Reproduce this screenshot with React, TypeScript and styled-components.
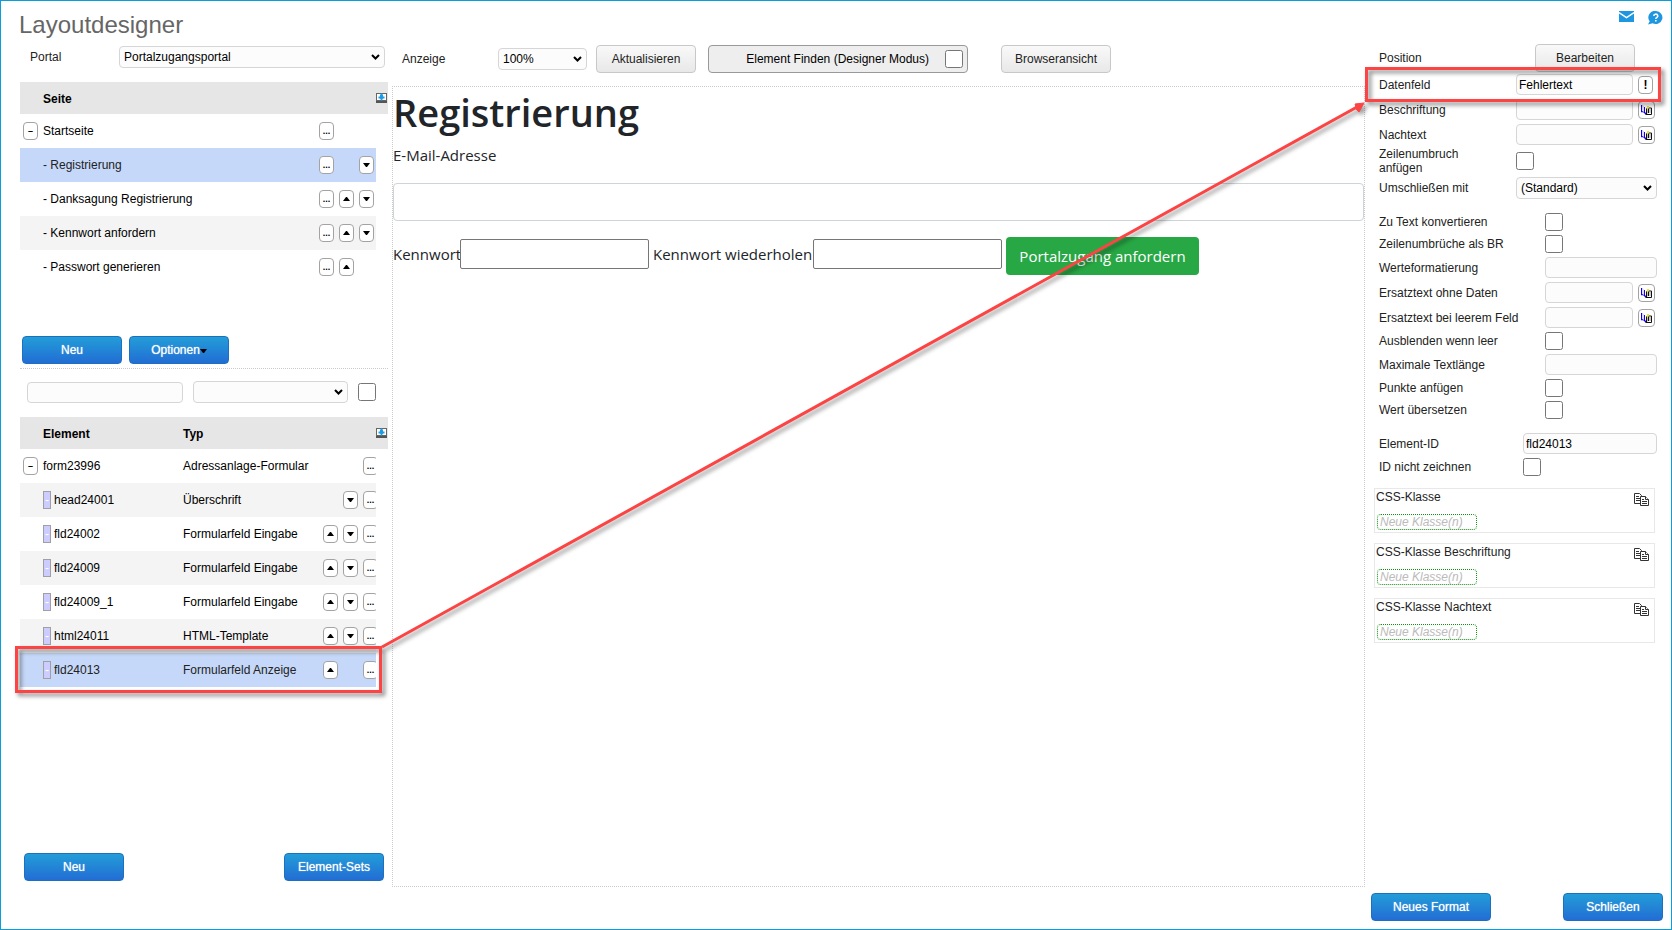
import React from "react";
import styled, { createGlobalStyle, css } from "styled-components";

const GlobalStyle = createGlobalStyle`
  *, *::before, *::after { box-sizing: border-box; }
  body {
    margin: 0;
    background: #fff;
    color: #222;
    font: 12px/14px "Liberation Sans", Arial, sans-serif;
  }
  button, input, select { font: inherit; color: #000; margin: 0; }
  button { padding: 0; cursor: pointer; }
`;

const accent = "#0a9fdb";
const marker = "#fb4443";

const Page = styled.div`
  position: relative;
  display: flex;
  flex-direction: column;
  min-height: 100vh;
  border: 1px solid ${accent};
`;

const Header = styled.header`
  display: flex;
  justify-content: space-between;
  align-items: flex-start;
  padding: 10px 8px 2px 18px;
`;

const Title = styled.h1`
  margin: 0;
  font-size: 24px;
  line-height: 28px;
  font-weight: 400;
  color: #666;
`;

const HeaderLinks = styled.nav`
  display: flex;
  gap: 14px;
  a { display: block; height: 14px; }
  svg { display: block; }
`;

const Columns = styled.main`
  flex: 1;
  display: flex;
  padding-left: 19px;
`;

/* Shared controls */

const control = css`
  border: 1px solid #d6d6d6;
  border-radius: 4px;
  background: #fcfcfc;
  min-width: 0;
`;

const TextInput = styled.input<{ $width?: number }>`
  ${control}
  ${(p) => (p.$width ? `width: ${p.$width}px;` : "flex: 1; width: 0;")}
  height: 21px;
  padding: 0 2px;
`;

const SelectBox = styled.div<{ $width?: number }>`
  position: relative;
  ${(p) => (p.$width ? `width: ${p.$width}px;` : "flex: 1;")}
  select {
    ${control}
    display: block;
    appearance: none;
    width: 100%;
    height: 22px;
    padding: 0 18px 0 4px;
  }
  svg {
    position: absolute;
    right: 5px;
    top: 8px;
    pointer-events: none;
  }
`;

const Checkbox = styled.input.attrs({ type: "checkbox" })`
  flex: none;
  width: 18px;
  height: 18px;
`;

const PrimaryButton = styled.button<{ $wide?: boolean }>`
  width: ${(p) => (p.$wide ? 120 : 100)}px;
  height: 28px;
  border: 1px solid #1c70bf;
  border-radius: 4px;
  background: linear-gradient(#239dd8, #226dd4);
  color: #fff;
  text-shadow: 0 0 1px rgba(255, 255, 255, 0.8);
  svg { vertical-align: middle; }
`;

const SecondaryButton = styled.button<{ $wide?: boolean }>`
  width: ${(p) => (p.$wide ? 110 : 100)}px;
  height: 28px;
  border: 1px solid #c8c8c8;
  border-radius: 4px;
  background: linear-gradient(#f9f9f9, #e8e8e8);
  color: #222;
`;

const MiniButton = styled.button<{ $wide?: boolean }>`
  flex: none;
  display: flex;
  align-items: center;
  justify-content: center;
  width: ${(p) => (p.$wide ? 17 : 15)}px;
  height: 18px;
  border: 1px solid #a3a3a3;
  border-radius: 4px;
  background: #fff;
`;

const Dots = styled.span`
  font-size: 9px;
  line-height: 12px;
  font-weight: 700;
`;

const Minus = styled.span`
  font-size: 9px;
  line-height: 12px;
  font-weight: 700;
`;

/* Left column */

const Sidebar = styled.aside`
  flex: none;
  display: flex;
  flex-direction: column;
  width: 368px;
  padding-bottom: 48px;
`;

const PortalRow = styled.div`
  display: flex;
  justify-content: space-between;
  align-items: center;
  padding: 5px 3px 14px 10px;
`;

const PagesPane = styled.section`
  height: 254px;
`;

const ElementsPane = styled.section`
  flex: 1;
`;

const Tree = styled.table`
  width: 100%;
  table-layout: fixed;
  border-collapse: collapse;
  color: #000;
  th, td { padding: 0; text-align: left; }
  th { padding-top: 2px; }
`;

const HeadRow = styled.tr`
  height: 32px;
  background: #e6e6e6;
  svg { display: block; }
`;

const BodyRow = styled.tr<{ $tone?: "selected" | "striped" }>`
  height: 34px;
  color: ${(p) => (p.$tone === "selected" ? "#222" : "#000")};
  td:not(:last-child) {
    background: ${(p) =>
      p.$tone === "selected" ? "#c6d8f9" : p.$tone === "striped" ? "#f4f4f4" : "#fff"};
  }
`;

const Toggle = styled.div`
  padding-left: 3px;
`;

const ElementName = styled.div`
  display: flex;
  align-items: center;
  gap: 3px;
`;

const Handle = styled.span`
  width: 8px;
  height: 18px;
  border: 1px solid #a0a0a0;
  background: #ccccff;
  color: #fff;
  line-height: 16px;
  text-align: center;
`;

const Actions = styled.div`
  display: grid;
  grid-template-columns: repeat(3, 15px);
  gap: 5px;
  overflow: hidden;
`;

const ButtonBar = styled.div`
  display: flex;
  gap: 7px;
  padding: 0 2px 4px;
  border-bottom: 1px dotted #ccc;
`;

const FilterBar = styled.div`
  display: flex;
  align-items: center;
  gap: 10px;
  padding: 12px 12px 14px 7px;
`;

const SidebarFooter = styled.footer`
  display: flex;
  justify-content: space-between;
  padding: 0 4px;
`;

/* Centre column */

const Workspace = styled.section`
  flex: 1;
  min-width: 0;
  display: flex;
  flex-direction: column;
  margin-left: 4px;
  padding-bottom: 42px;
`;

const Toolbar = styled.div`
  display: flex;
  align-items: center;
  padding: 4px 0 13px 10px;
`;

const ToolbarLabel = styled.label`
  width: 96px;
`;

const ToolbarGroup = styled.div`
  display: flex;
  align-items: center;
  gap: 12px;
  margin: 0 33px 0 9px;
`;

const FinderToggle = styled.label`
  display: flex;
  align-items: center;
  justify-content: flex-end;
  gap: 16px;
  width: 260px;
  height: 28px;
  padding-right: 4px;
  border: 1px solid #999;
  border-radius: 4px;
  background: #eee;
  color: #000;
`;

const Preview = styled.div`
  flex: 1;
  border: 1px dotted #ccc;
  color: #212529;
  font: 15px/24px "Open Sans", "Noto Sans", sans-serif;
`;

const PreviewHeading = styled.h2`
  margin: 0;
  padding: 1px 0 7px;
  font-size: 38px;
  line-height: 48px;
  font-weight: 600;
`;

const EmailField = styled.label`
  display: flex;
  flex-direction: column;
  gap: 16px;
  margin-bottom: 16px;
`;

const EmailInput = styled.input`
  width: 100%;
  height: 38px;
  border: 1px solid #ced4da;
  border-radius: 4px;
  background: #fff;
`;

const PasswordRow = styled.div`
  display: flex;
  align-items: flex-start;
`;

const PasswordField = styled.label<{ $labelWidth: number }>`
  display: flex;
  align-items: center;
  margin-right: 4px;
  padding-top: 2px;
  white-space: nowrap;
  span { width: ${(p) => p.$labelWidth}px; }
`;

const PasswordInput = styled.input`
  width: 189px;
  height: 30px;
  border: 1px solid #767676;
  border-radius: 2px;
  background: #fff;
`;

const SubmitButton = styled.button`
  width: 193px;
  height: 38px;
  border: 0;
  border-radius: 4px;
  background: #28a745;
  color: #fff;
  white-space: nowrap;
`;

/* Right column */

const Inspector = styled.aside`
  flex: none;
  display: flex;
  flex-direction: column;
  width: 306px;
  padding: 3px 0 8px;
`;

const PropertyGroup = styled.section<{ $labelWidth: number }>`
  margin-bottom: 10px;
  padding: 0 14px;
  label, .caption {
    flex: none;
    width: ${(p) => p.$labelWidth}px;
    padding-right: 24px;
  }
`;

const PropertyRow = styled.div<{ $height: number }>`
  display: flex;
  align-items: center;
  height: ${(p) => p.$height}px;
`;

const PropertyValue = styled.div<{ $indent?: boolean }>`
  flex: 1;
  display: flex;
  align-items: center;
  gap: 5px;
  padding-left: ${(p) => (p.$indent ? 19 : 0)}px;
`;

const AddonSlot = styled.div`
  flex: none;
  width: 19px;
`;

const ClassList = styled.section`
  flex: 1;
  display: flex;
  flex-direction: column;
  gap: 10px;
  padding: 0 16px 0 9px;
`;

const ClassBox = styled.div`
  height: 45px;
  border: 1px solid #e8e8e8;
  padding: 1px 5px 0 1px;
`;

const ClassHead = styled.div`
  display: flex;
  justify-content: space-between;
  align-items: flex-start;
  height: 24px;
`;

const CopyButton = styled.button`
  margin-top: 3px;
  border: 0;
  background: none;
  svg { display: block; }
`;

const ClassInput = styled.input`
  display: block;
  width: 100px;
  height: 16px;
  margin-left: 1px;
  padding: 0 2px;
  border: 1px dotted #0a960a;
  border-radius: 4px;
  background: #fff;
  font-style: italic;
  &::placeholder { color: #bbb; opacity: 1; }
`;

const InspectorFooter = styled.footer`
  display: flex;
  justify-content: space-between;
  padding: 0 8px 0 6px;
`;

/* Annotations over the page */

const Callout = styled.div<{ $at: "element" | "property" }>`
  position: absolute;
  border: 3px solid ${marker};
  filter: drop-shadow(3px 3px 2px rgba(0, 0, 0, 0.5));
  pointer-events: none;
  ${(p) =>
    p.$at === "element"
      ? "left: 14px; top: 645px; width: 367px; height: 47px;"
      : "right: 10px; top: 66px; width: 296px; height: 35px;"}
`;

const Pointer = styled.svg`
  position: absolute;
  left: 381px;
  top: 101px;
  width: calc(100% - 688px);
  height: 545px;
  overflow: visible;
  filter: drop-shadow(3px 3px 2px rgba(0, 0, 0, 0.4));
  pointer-events: none;
`;

/* Icons */

const Triangle = ({ down }: { down?: boolean }) => (
  <svg width="7" height="4" viewBox="0 0 7 4" aria-hidden="true">
    <path d={down ? "M0 0h7L4 4H3z" : "M0 4h7L4 0H3z"} fill="#000" />
  </svg>
);

const Chevron = () => (
  <svg width="9" height="6" viewBox="0 0 9 6" aria-hidden="true">
    <path d="M1 1l3.500 3.500L8 1" fill="none" stroke="#000" strokeWidth="2" />
  </svg>
);

const ExportIcon = () => (
  <svg width="11" height="10" viewBox="0 0 11 10" aria-hidden="true">
    <path d="M0 0h11v10H0z" fill="#666" />
    <path d="M1 1h9v6H1z" fill="#fff" />
    <path d="M0 8h11v2H0z" fill="#555" />
    <path d="M5.500 0L7 2v1.500h1.500v2H7L5.500 8 4 5.500H2.500v-2H4V2z" fill="#1d9be3" />
  </svg>
);

const BookIcon = () => (
  <svg width="11" height="10" viewBox="0 0 11 10" aria-hidden="true">
    <path d="M0.500 0v6.500h2L5 9" fill="none" stroke="#1400e0" strokeWidth="1.400" />
    <path d="M1 1h2v6l-2-1z" fill="#dcdcff" />
    <path d="M3.500 2v5" stroke="#1400e0" />
    <path d="M5 4l2-3h1v7l-3 1z" fill="#bbb" />
    <path d="M6 1h2v2L5.500 6z" fill="#f3df3a" />
    <path d="M5.500 3.500V9M7.500 3.500V8M8 3h2.500v6.500h-6" fill="none" stroke="#111" />
    <path d="M8.500 4h1v4h-1z" fill="#999" />
  </svg>
);

const CopyIcon = () => (
  <svg width="15" height="14" viewBox="0 0 15 14" aria-hidden="true">
    <g fill="#fff" stroke="#333">
      <path d="M0.500 0.500h5l2 2v8h-7z" />
      <path d="M2 3.500h3M2 5.500h4M2 7.500h4" />
      <path d="M6.500 3.500h5l3 3v6h-8z" />
      <path d="M11.500 3.500v3h3M8 6.500h2M8 8.500h5M8 10.500h5" />
    </g>
  </svg>
);

/* Data */

type Tone = "selected" | "striped" | undefined;

const pages: { name: string; root?: boolean; up?: boolean; down?: boolean; tone?: Tone }[] = [
  { name: "Startseite", root: true },
  { name: "- Registrierung", down: true, tone: "selected" },
  { name: "- Danksagung Registrierung", up: true, down: true },
  { name: "- Kennwort anfordern", up: true, down: true, tone: "striped" },
  { name: "- Passwort generieren", up: true },
];

const elements: {
  name: string; type: string; root?: boolean; up?: boolean; down?: boolean; tone?: Tone;
}[] = [
  { name: "form23996", type: "Adressanlage-Formular", root: true },
  { name: "head24001", type: "Überschrift", down: true, tone: "striped" },
  { name: "fld24002", type: "Formularfeld Eingabe", up: true, down: true },
  { name: "fld24009", type: "Formularfeld Eingabe", up: true, down: true, tone: "striped" },
  { name: "fld24009_1", type: "Formularfeld Eingabe", up: true, down: true },
  { name: "html24011", type: "HTML-Template", up: true, down: true, tone: "striped" },
  { name: "fld24013", type: "Formularfeld Anzeige", up: true, tone: "selected" },
];

type Kind = "text" | "check" | "translated" | "picked" | "select";

const groups: {
  labelWidth: number;
  rows: { id: string; label: string; kind: Kind; value?: string; height?: number }[];
}[] = [
  {
    labelWidth: 137,
    rows: [
      { id: "datafield", label: "Datenfeld", kind: "picked", value: "Fehlertext" },
      { id: "caption", label: "Beschriftung", kind: "translated" },
      { id: "suffix", label: "Nachtext", kind: "translated" },
      { id: "newline", label: "Zeilenumbruch anfügen", kind: "check", height: 28 },
      { id: "wrap", label: "Umschließen mit", kind: "select", value: "(Standard)", height: 26 },
    ],
  },
  {
    labelWidth: 166,
    rows: [
      { id: "totext", label: "Zu Text konvertieren", kind: "check" },
      { id: "br", label: "Zeilenumbrüche als BR", kind: "check" },
      { id: "format", label: "Werteformatierung", kind: "text" },
      { id: "nodata", label: "Ersatztext ohne Daten", kind: "translated" },
      { id: "empty", label: "Ersatztext bei leerem Feld", kind: "translated" },
      { id: "hide", label: "Ausblenden wenn leer", kind: "check" },
      { id: "maxlen", label: "Maximale Textlänge", kind: "text" },
      { id: "ellipsis", label: "Punkte anfügen", kind: "check" },
      { id: "translate", label: "Wert übersetzen", kind: "check" },
    ],
  },
  {
    labelWidth: 144,
    rows: [
      { id: "elementid", label: "Element-ID", kind: "text", value: "fld24013" },
      { id: "noid", label: "ID nicht zeichnen", kind: "check" },
    ],
  },
];

const classBoxes = [
  { id: "css-main", label: "CSS-Klasse" },
  { id: "css-caption", label: "CSS-Klasse Beschriftung" },
  { id: "css-suffix", label: "CSS-Klasse Nachtext" },
];

const UpButton = () => (
  <MiniButton type="button" aria-label="Nach oben"><Triangle /></MiniButton>
);
const DownButton = () => (
  <MiniButton type="button" aria-label="Nach unten"><Triangle down /></MiniButton>
);
const MoreButton = () => (
  <MiniButton type="button" aria-label="Mehr"><Dots>...</Dots></MiniButton>
);
const CollapseButton = () => (
  <Toggle>
    <MiniButton type="button" aria-label="Zuklappen"><Minus>–</Minus></MiniButton>
  </Toggle>
);

function Select({
  id, label, width, option,
}: { id?: string; label?: string; width?: number; option?: string }) {
  return (
    <SelectBox $width={width}>
      <select id={id} aria-label={label}><option>{option}</option></select>
      <Chevron />
    </SelectBox>
  );
}

function PropertyControl({ id, kind, value }: { id: string; kind: Kind; value?: string }) {
  if (kind === "check") return <Checkbox id={id} />;
  if (kind === "select") return <Select id={id} option={value} />;
  return (
    <>
      <TextInput id={id} type="text" defaultValue={value} />
      {kind === "translated" && (
        <AddonSlot>
          <MiniButton type="button" $wide aria-label="Übersetzen"><BookIcon /></MiniButton>
        </AddonSlot>
      )}
      {kind === "picked" && (
        <AddonSlot>
          <MiniButton type="button" aria-label="Feld wählen"><strong>!</strong></MiniButton>
        </AddonSlot>
      )}
    </>
  );
}

export default function App() {
  return (
    <Page>
      <GlobalStyle />
      <Header>
        <Title>Layoutdesigner</Title>
        <HeaderLinks>
          <a href="#nachricht" aria-label="Nachricht">
            <svg width="15" height="11" viewBox="0 0 15 11">
              <path d="M0 0h15v11H0z" fill="#1e96e0" />
              <path d="M0 1.500l7.500 5 7.500-5" fill="none" stroke="#fff" strokeWidth="1.500" />
            </svg>
          </a>
          <a href="#hilfe" aria-label="Hilfe">
            <svg width="15" height="14" viewBox="0 0 15 14">
              <path d="M8 0a6.700 6.500 0 1 1-3.500 12.200L0 13.500l1.700-3.200A6.500 6.500 0 0 1 8 0z" fill="#1e96e0" />
              <path d="M5.800 5a2 1.800 0 1 1 3 1.500q-1 .5-1 1.500" fill="none" stroke="#fff" strokeWidth="1.500" />
              <path d="M7 9h1.600v1.500H7z" fill="#fff" />
            </svg>
          </a>
        </HeaderLinks>
      </Header>

      <Columns>
        <Sidebar>
          <PortalRow>
            <label htmlFor="portal">Portal</label>
            <Select id="portal" width={266} option="Portalzugangsportal" />
          </PortalRow>

          <PagesPane>
            <Tree>
              <colgroup>
                <col style={{ width: 23 }} />
                <col />
                <col style={{ width: 57 }} />
                <col style={{ width: 12 }} />
              </colgroup>
              <thead>
                <HeadRow>
                  <td />
                  <th scope="col">Seite</th>
                  <td />
                  <td><ExportIcon /></td>
                </HeadRow>
              </thead>
              <tbody>
                {pages.map((p) => (
                  <BodyRow key={p.name} $tone={p.tone}>
                    <td>{p.root && <CollapseButton />}</td>
                    <td>{p.name}</td>
                    <td>
                      <Actions>
                        <MoreButton />
                        {p.up ? <UpButton /> : <span />}
                        {p.down ? <DownButton /> : <span />}
                      </Actions>
                    </td>
                    <td />
                  </BodyRow>
                ))}
              </tbody>
            </Tree>
          </PagesPane>
          <ButtonBar>
            <PrimaryButton type="button">Neu</PrimaryButton>
            <PrimaryButton type="button">Optionen<Triangle down /></PrimaryButton>
          </ButtonBar>

          <FilterBar>
            <TextInput type="text" aria-label="Elementname" $width={156} />
            <Select label="Elementtyp" width={155} />
            <Checkbox aria-label="Filter aktiv" />
          </FilterBar>
          <ElementsPane>
            <Tree>
              <colgroup>
                <col style={{ width: 23 }} />
                <col style={{ width: 140 }} />
                <col />
                <col style={{ width: 53 }} />
                <col style={{ width: 12 }} />
              </colgroup>
              <thead>
                <HeadRow>
                  <td />
                  <th scope="col">Element</th>
                  <th scope="col">Typ</th>
                  <td />
                  <td><ExportIcon /></td>
                </HeadRow>
              </thead>
              <tbody>
                {elements.map((e) => (
                  <BodyRow key={e.name} $tone={e.tone}>
                    <td>{e.root && <CollapseButton />}</td>
                    <td>
                      <ElementName>
                        {!e.root && <Handle>-</Handle>}
                        {e.name}
                      </ElementName>
                    </td>
                    <td>{e.type}</td>
                    <td>
                      <Actions>
                        {e.up ? <UpButton /> : <span />}
                        {e.down ? <DownButton /> : <span />}
                        <MoreButton />
                      </Actions>
                    </td>
                    <td />
                  </BodyRow>
                ))}
              </tbody>
            </Tree>
          </ElementsPane>
          <SidebarFooter>
            <PrimaryButton type="button">Neu</PrimaryButton>
            <PrimaryButton type="button">Element-Sets</PrimaryButton>
          </SidebarFooter>
        </Sidebar>

        <Workspace>
          <Toolbar>
            <ToolbarLabel htmlFor="zoom">Anzeige</ToolbarLabel>
            <Select id="zoom" width={89} option="100%" />
            <ToolbarGroup>
              <SecondaryButton type="button">Aktualisieren</SecondaryButton>
              <FinderToggle>
                Element Finden (Designer Modus)
                <Checkbox />
              </FinderToggle>
            </ToolbarGroup>
            <SecondaryButton type="button" $wide>Browseransicht</SecondaryButton>
          </Toolbar>
          <Preview>
            <PreviewHeading>Registrierung</PreviewHeading>
            <EmailField>
              E-Mail-Adresse
              <EmailInput type="email" />
            </EmailField>
            <PasswordRow>
              <PasswordField $labelWidth={67}>
                <span>Kennwort</span>
                <PasswordInput type="password" />
              </PasswordField>
              <PasswordField $labelWidth={160}>
                <span>Kennwort wiederholen</span>
                <PasswordInput type="password" />
              </PasswordField>
              <SubmitButton type="button">Portalzugang anfordern</SubmitButton>
            </PasswordRow>
          </Preview>
        </Workspace>

        <Inspector>
          {groups.map((g, i) => (
            <PropertyGroup key={g.labelWidth} $labelWidth={g.labelWidth}>
              {i === 0 && (
                <PropertyRow $height={28}>
                  <span className="caption">Position</span>
                  <PropertyValue $indent>
                    <SecondaryButton type="button">Bearbeiten</SecondaryButton>
                  </PropertyValue>
                </PropertyRow>
              )}
              {g.rows.map((r) => (
                <PropertyRow key={r.id} $height={r.height ?? (r.kind === "check" ? 22 : 25)}>
                  <label htmlFor={r.id}>{r.label}</label>
                  <PropertyValue>
                    <PropertyControl id={r.id} kind={r.kind} value={r.value} />
                  </PropertyValue>
                </PropertyRow>
              ))}
            </PropertyGroup>
          ))}
          <ClassList>
            {classBoxes.map((box) => (
              <ClassBox key={box.id}>
                <ClassHead>
                  <label htmlFor={box.id}>{box.label}</label>
                  <CopyButton type="button" aria-label="Kopieren"><CopyIcon /></CopyButton>
                </ClassHead>
                <ClassInput id={box.id} type="text" placeholder="Neue Klasse(n)" />
              </ClassBox>
            ))}
          </ClassList>
          <InspectorFooter>
            <PrimaryButton type="button" $wide>Neues Format</PrimaryButton>
            <PrimaryButton type="button">Schließen</PrimaryButton>
          </InspectorFooter>
        </Inspector>
      </Columns>

      <Callout $at="element" />
      <Callout $at="property" />
      <Pointer viewBox="0 0 982 545" preserveAspectRatio="none" aria-hidden="true">
        <path d="M0 545L975 5" stroke={marker} strokeWidth="3" fill="none" />
        <path d="M982 1l-9 1 1 3-1 1 4 4z" fill={marker} stroke={marker} />
      </Pointer>
    </Page>
  );
}
